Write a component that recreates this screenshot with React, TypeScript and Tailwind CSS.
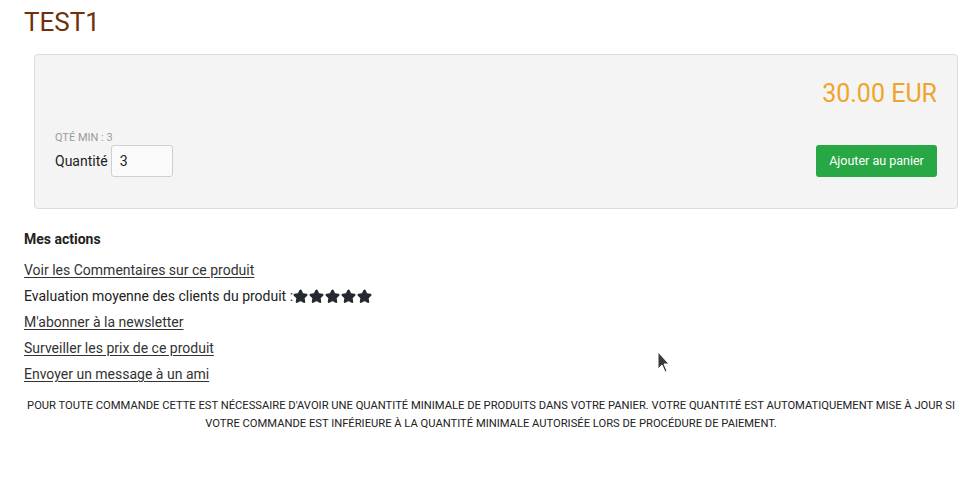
import { Star } from 'lucide-react'

const links = [
  'Voir les Commentaires sur ce produit',
  'M\'abonner à la newsletter',
  'Surveiller les prix de ce produit',
  'Envoyer un message à un ami',
]

function Stars() {
  return (
    <span className="inline-flex items-center gap-px">
      {[0, 1, 2, 3, 4].map((i) => (
        <Star key={i} size={15} className="fill-[#262a30] text-[#262a30]" strokeWidth={2.5} />
      ))}
    </span>
  )
}

function Cursor() {
  return (
    <svg className="absolute left-[657px] top-[351px]" width="14" height="22" viewBox="0 0 14 22">
      <path d="M1 1 L1 18 L5 14 L8 21 L10 20 L7 13 L12 13 Z" fill="#3a3a3a" stroke="#fff" strokeWidth="1" />
    </svg>
  )
}

export default function App() {
  return (
    <div className="relative min-h-[488px] w-[974px] bg-white pl-[24px] pr-[16px] font-['Roboto',sans-serif] text-[14px] text-[#222]">
      <h1 className="pt-[6px] text-[26px] leading-[32px] text-[#6f300c]">TEST1</h1>

      <div className="ml-[10px] mt-[16px] h-[155px] rounded-[4px] border border-[#dcdcdc] bg-[#f4f4f4] px-[20px] pt-[24px]">
        <div className="text-right text-[25px] leading-[30px] text-[#efa52c]">30.00 EUR</div>
        <div className="mt-[23px] flex items-end justify-between">
          <div>
            <div className="text-[11px] leading-[12px] text-[#9a9a9a]">QTÉ MIN : 3</div>
            <div className="mt-[1px] flex items-center gap-[3px]">
              <span className="text-[14px] text-[#222]">Quantité</span>
              <input
                defaultValue="3"
                className="h-[32px] w-[62px] rounded-[3px] border border-[#cfcfcf] bg-[#fafafa] px-[8px] text-[14px] text-[#222] outline-none"
              />
            </div>
          </div>
          <button className="h-[32px] w-[121px] rounded-[3px] bg-[#28a745] text-[12.5px] text-white">
            Ajouter au panier
          </button>
        </div>
      </div>

      <div className="mt-[22px] text-[14px] font-bold leading-[16px] text-[#222]">Mes actions</div>
      <ul className="mt-[14px] flex flex-col gap-[8px] text-[14px] leading-[18px] text-[#333]">
        <li><a href="#" className="underline underline-offset-2">{links[0]}</a></li>
        <li className="flex items-center text-[#222]">
          Evaluation moyenne des clients du produit :<Stars />
        </li>
        <li><a href="#" className="underline underline-offset-2">{links[1]}</a></li>
        <li><a href="#" className="underline underline-offset-2">{links[2]}</a></li>
        <li><a href="#" className="underline underline-offset-2">{links[3]}</a></li>
      </ul>

      <p className="mt-[14px] text-center text-[11.2px] uppercase leading-[18px] text-[#222]">
        Pour toute commande cette est nécessaire d'avoir une quantité minimale de produits dans votre panier. Votre quantité est automatiquement mise à jour si votre commande est inférieure à la quantité minimale autorisée lors de procédure de paiement.
      </p>

      <Cursor />
    </div>
  )
}
